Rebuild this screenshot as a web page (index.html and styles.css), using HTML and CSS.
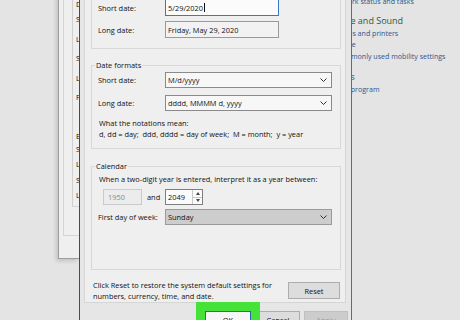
FILE: index.html
```html
<!DOCTYPE html>
<html lang="en">
<head>
    <meta charset="UTF-8">
    <title>Customize Format</title>
    <link rel="stylesheet" href="styles.css">
</head>
<body>
    <div class="desktop">
        <div class="cpanel">
            <div class="cp-inner">
                <p class="cp-link">View network status and tasks</p>
                <p class="cp-head">Hardware and Sound</p>
                <p class="cp-link">View devices and printers</p>
                <p class="cp-link">Add a device</p>
                <p class="cp-link">Adjust commonly used mobility settings</p>
                <p class="cp-head cp-gap">Programs</p>
                <p class="cp-link">Uninstall a program</p>
            </div>
        </div>

        <div class="region">
            <div class="region-page">
                <div class="region-list">
                    <div class="region-title">Date and time formats</div>
                    <div class="region-row">Short date:</div>
                    <div class="region-row">Long date:</div>
                    <div class="region-row">Short time:</div>
                    <div class="region-row">Long time:</div>
                    <div class="region-row">First day of week:</div>
                    <div class="region-title region-examples">Examples</div>
                    <div class="region-row small">Short date:</div>
                    <div class="region-row small">Long date:</div>
                    <div class="region-row small">Short time:</div>
                    <div class="region-row small">Long time:</div>
                </div>
            </div>
        </div>

        <div class="dialog">
            <div class="page">
                <fieldset class="group group-example">
                    <legend>Example</legend>
                    <div class="row">
                        <span class="label">Short date:</span>
                        <span class="box box-focus">5/29/2020<span class="caret"></span></span>
                    </div>
                    <div class="row row-next">
                        <span class="label">Long date:</span>
                        <span class="box box-read">Friday, May 29, 2020</span>
                    </div>
                </fieldset>

                <fieldset class="group group-formats">
                    <legend>Date formats</legend>
                    <div class="row">
                        <span class="label">Short date:</span>
                        <span class="combo">M/d/yyyy
                            <svg class="chev" width="7" height="4" viewBox="0 0 7 4"><polyline points="0.5,0.5 3.5,3.5 6.5,0.5" fill="none" stroke="#333" stroke-width="1"/></svg>
                        </span>
                    </div>
                    <div class="row row-combo">
                        <span class="label">Long date:</span>
                        <span class="combo">dddd, MMMM d, yyyy
                            <svg class="chev" width="7" height="4" viewBox="0 0 7 4"><polyline points="0.5,0.5 3.5,3.5 6.5,0.5" fill="none" stroke="#333" stroke-width="1"/></svg>
                        </span>
                    </div>
                    <p class="note">What the notations mean:<br>d, dd = day;&nbsp; ddd, dddd = day of week;&nbsp; M = month;&nbsp; y = year</p>
                </fieldset>

                <fieldset class="group group-calendar">
                    <legend>Calendar</legend>
                    <p class="cal-text">When a two-digit year is entered, interpret it as a year between:</p>
                    <div class="row row-years">
                        <span class="box box-off">1950</span>
                        <span class="and">and</span>
                        <span class="spin">
                            <span class="spin-text">2049</span>
                            <span class="spin-btns">
                                <span class="spin-up"></span>
                                <span class="spin-down"></span>
                            </span>
                        </span>
                    </div>
                    <div class="row row-week">
                        <span class="label">First day of week:</span>
                        <span class="combo combo-hover">Sunday
                            <svg class="chev" width="7" height="4" viewBox="0 0 7 4"><polyline points="0.5,0.5 3.5,3.5 6.5,0.5" fill="none" stroke="#333" stroke-width="1"/></svg>
                        </span>
                    </div>
                </fieldset>

                <div class="reset-row">
                    <p class="reset-text">Click Reset to restore the system default settings for<br>numbers, currency, time, and date.</p>
                    <button class="btn btn-reset">Reset</button>
                </div>
            </div>

            <div class="buttons">
                <button class="btn btn-ok">OK</button>
                <button class="btn btn-cancel">Cancel</button>
                <button class="btn btn-apply">Apply</button>
            </div>
        </div>
    </div>
</body>
</html>
```

FILE: styles.css
```css
* {
    margin: 0;
    padding: 0;
    box-sizing: border-box;
}

body {
    background: #e3e3e3;
    font-family: 'Open Sans', 'Noto Sans', sans-serif;
    color: #111;
}

.desktop {
    position: relative;
    width: 460px;
    height: 320px;
    overflow: hidden;
    background: #e4e4e4;
}

/* control panel window, only its right part shows past the dialog */
.cpanel {
    position: absolute;
    left: 352px;
    top: -4px;
    right: 0;
    overflow: hidden;
}

.cp-inner {
    margin-left: -38px;
}

.cp-link {
    font-size: 7.1px;
    line-height: 11.5px;
    color: #2c5590;
    white-space: nowrap;
}

.cp-head {
    font-size: 9px;
    line-height: 14px;
    color: #2a5e34;
    margin-top: 6px;
    white-space: nowrap;
}

.cp-head.cp-gap {
    margin-top: 8px;
}

/* region window, a thin strip shows left of the dialog */
.region {
    position: absolute;
    left: 58px;
    top: -20px;
    width: 21px;
    height: 279px;
    overflow: hidden;
    background: #efefef;
    border: 1px solid #9d9d9d;
    border-right: none;
    box-shadow: -2px 2px 4px rgba(0, 0, 0, 0.15);
}

.region-page {
    margin-left: 4px;
    height: 255px;
    border: 1px solid #d4d4d4;
    border-top: none;
    border-right: none;
    padding-left: 8px;
}

.region-list {
    height: 226px;
    border-left: 1px solid #cfcfcf;
    border-bottom: 1px solid #d4d4d4;
    padding: 17px 0 0 3px;
    font-size: 7.4px;
    white-space: nowrap;
}

.region-title {
    line-height: 12px;
}

.region-row {
    line-height: 19.6px;
}

.region-row.small {
    line-height: 15.5px;
}

.region-examples {
    margin-top: 22px;
}

/* customize format dialog */
.dialog {
    position: absolute;
    left: 79px;
    top: -30px;
    width: 273px;
    background: #e6e6e6;
    border-left: 1px solid #4a4a4a;
    border-right: 1px solid #6a6a6a;
    font-size: 7.4px;
}

.page {
    margin: 0 5px 0 4px;
    background: #efefef;
    border: 1px solid #d6d6d6;
    border-top: none;
    padding: 0 4px 1px 6px;
}

.group {
    border: 1px solid #d8d8d8;
    margin: 0;
    padding: 0 8px 0 6px;
    min-width: 0;
}

.group legend {
    font-size: 7.4px;
    line-height: 10px;
    padding: 0 1px;
    margin-left: -3px;
}

.group-example {
    padding-top: 19px;
    padding-bottom: 10px;
}

.group-formats {
    margin-top: 11px;
    padding-top: 2px;
    padding-bottom: 8px;
}

.group-calendar {
    margin-top: 12px;
    padding-top: 3px;
    padding-bottom: 44px;
}

.row {
    display: flex;
    align-items: center;
    height: 17px;
}

.row-next {
    margin-top: 5px;
}

.group-formats .row,
.group-calendar .row {
    height: 16px;
}

.row-combo {
    margin-top: 7px;
}

.label {
    width: 67px;
    flex: none;
}

.box {
    display: flex;
    align-items: center;
    height: 100%;
    border: 1px solid #8a8a8a;
    background: #f7f7f7;
    padding-left: 2px;
}

.box-focus {
    width: 114px;
    border-color: #3b78c4;
    background: #fbfbfb;
}

.box-read {
    width: 114px;
    background: #f2f2f2;
    border-color: #9a9a9a;
}

.caret {
    display: inline-block;
    width: 1px;
    height: 9px;
    background: #111;
    margin-left: 1px;
}

.combo {
    display: flex;
    align-items: center;
    justify-content: space-between;
    width: 167px;
    height: 100%;
    border: 1px solid #8a8a8a;
    background: #f7f7f7;
    padding: 0 4px 0 2px;
}

.combo-hover {
    background: #cdcdcd;
    border-color: #9a9a9a;
}

.note {
    margin-top: 7px;
    line-height: 11px;
    padding-left: 1px;
}

.cal-text {
    line-height: 11px;
    padding-left: 1px;
}

.row-years {
    margin-top: 4px;
    padding-left: 5px;
}

.box-off {
    width: 39px;
    background: #ececec;
    border-color: #cacaca;
    color: #8a8a8a;
    padding-left: 4px;
}

.and {
    width: 23px;
    padding-left: 5px;
}

.spin {
    display: flex;
    width: 38px;
    height: 100%;
    border: 1px solid #7e7e7e;
    background: #fbfbfb;
}

.spin-text {
    flex: 1;
    display: flex;
    align-items: center;
    padding-left: 2px;
}

.spin-btns {
    width: 10px;
    display: flex;
    flex-direction: column;
    border-left: 1px solid #c8c8c8;
}

.spin-up,
.spin-down {
    flex: 1;
    display: flex;
    align-items: center;
    justify-content: center;
}

.spin-up {
    border-bottom: 1px solid #c8c8c8;
}

.spin-up::after {
    content: '';
    border-left: 2.5px solid transparent;
    border-right: 2.5px solid transparent;
    border-bottom: 3px solid #444;
}

.spin-down::after {
    content: '';
    border-left: 2.5px solid transparent;
    border-right: 2.5px solid transparent;
    border-top: 3px solid #444;
}

.row-week {
    margin-top: 4px;
}

.reset-row {
    display: flex;
    align-items: center;
    justify-content: space-between;
    margin-top: 10px;
    padding: 0 0 0 2px;
}

.reset-text {
    line-height: 10.5px;
}

.btn {
    font-family: 'Open Sans', 'Noto Sans', sans-serif;
    font-size: 7.4px;
    height: 17px;
    color: #111;
    background: #dddddd;
    border: 1px solid #adadad;
}

.btn-reset {
    width: 52px;
    margin-right: 1px;
}

.buttons {
    display: flex;
    justify-content: flex-end;
    gap: 4px;
    padding: 8px 3px 10px 0;
}

.btn-ok {
    position: relative;
    z-index: 1;
    width: 46px;
    margin-right: 1px;
    background: #f6f6f6;
    border-color: #2b64b4;
    box-shadow: 0 0 0 9px #45e23a;
}

.btn-cancel {
    width: 44px;
}

.btn-apply {
    width: 44px;
    background: #cccccc;
    border-color: #c0c0c0;
    color: #9a9a9a;
}
```
